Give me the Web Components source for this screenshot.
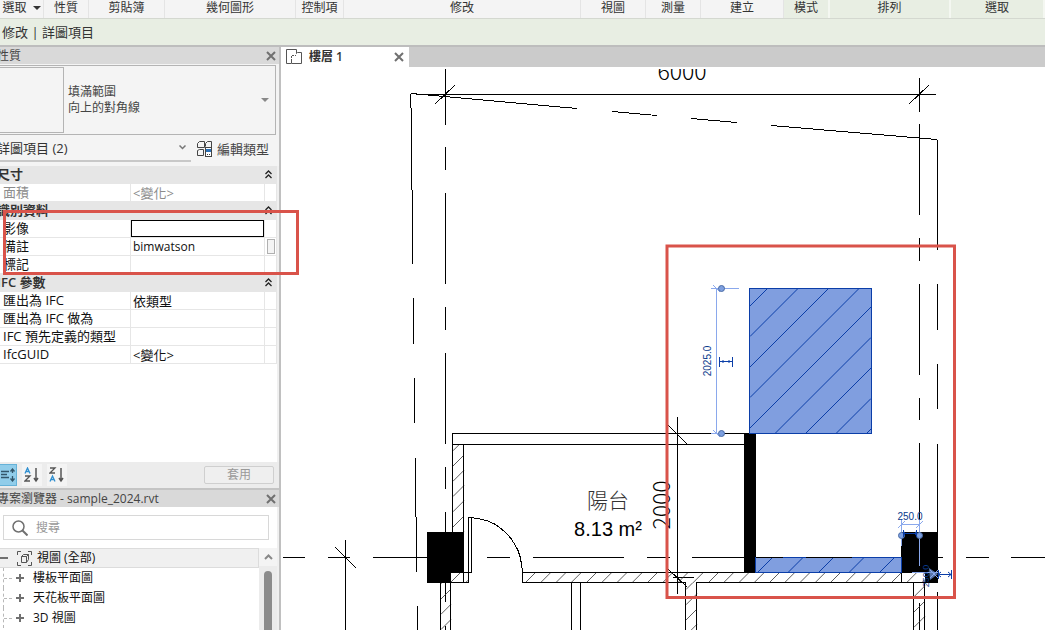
<!DOCTYPE html>
<html lang="zh-Hant">
<head>
<meta charset="utf-8">
<title>樓層 1</title>
<style>
html, body { height: 100%; }
body { margin: 0; overflow: hidden; background: #fff; color: #333;
  font: 12px/16px "Open Sans", "Noto Sans CJK TC", sans-serif; }
</style>
</head>
<body>
<cad-app></cad-app>
<script>
const base = `*{box-sizing:border-box} button,input,select{font:inherit;color:inherit;margin:0;padding:0;border:0;background:none;border-radius:0;outline:0} svg{display:block}`;

function define(name, html) {
  customElements.define(name, class extends HTMLElement {
    connectedCallback() {
      if (this.shadowRoot) return;
      const root = this.attachShadow({ mode: 'open' });
      const t = document.createElement('template');
      t.innerHTML = html;
      root.append(t.content.cloneNode(true));
    }
  });
}

define('ribbon-group', `<style>${base}
:host{display:flex;align-items:center;justify-content:center;height:18px;padding-bottom:2px;border-right:1px solid #e4e4e4;background:#f4f4f4;white-space:nowrap;overflow:hidden}
:host([context]){background:#e8eee3;border-right:2px solid #f4f7f1}
</style><slot></slot>`);

define('ribbon-bar', `<style>${base}
:host{display:block;border-bottom:2px solid #bdbdbd}
.groups{display:grid;grid-template-columns:44fr 45fr 76fr 131fr 48fr 237fr 65fr 55fr 83fr 46fr 121fr 94fr;border-bottom:1px solid #d4d8d0}
button{display:flex;align-items:center;gap:6px}
.options{height:26px;background:#e8eee3;padding:5px 2px;font-size:13px}
</style>
<div class="groups">
<ribbon-group><button>選取<svg width="8" height="4"><path d="M0 0h8L4 4z" fill="#333"/></svg></button></ribbon-group>
<ribbon-group>性質</ribbon-group><ribbon-group>剪貼簿</ribbon-group><ribbon-group>幾何圖形</ribbon-group>
<ribbon-group>控制項</ribbon-group><ribbon-group>修改</ribbon-group><ribbon-group>視圖</ribbon-group>
<ribbon-group>測量</ribbon-group><ribbon-group>建立</ribbon-group>
<ribbon-group context>模式</ribbon-group><ribbon-group context>排列</ribbon-group><ribbon-group context>選取</ribbon-group>
</div>
<div class="options">修改 | 詳圖項目</div>`);

define('close-button', `<style>${base}
:host{display:block} button{display:block}
</style><button aria-label="關閉"><svg width="10" height="10" stroke="#707070" stroke-width="2"><path d="M1 1l8 8M9 1l-8 8"/></svg></button>`);

define('panel-title', `<style>${base}
:host{display:flex;align-items:center;justify-content:space-between;height:17px;padding-right:3px;background:#d9d9d9;color:#444;text-indent:-3px;white-space:nowrap}
</style><span><slot></slot></span><close-button></close-button>`);

define('type-selector', `<style>${base}
:host{display:block;padding:1px 3px 0 0}
button{display:flex;align-items:center;width:100%;height:70px;border:1px solid #b4b4b4;border-left:0;text-align:left;padding-right:6px;color:#444}
.preview{width:64px;height:66px;border:1px solid #b4b4b4;border-left:0;margin-right:4px}
.name{flex:1}
.filter{display:flex;align-items:flex-start;height:31px;font-size:13px}
.filter select{appearance:none;width:191px;height:27px;border-bottom:2px solid #c8c8c8;text-indent:-3px;
 background:url("data:image/svg+xml,%3Csvg xmlns='http://www.w3.org/2000/svg' width='7' height='5'%3E%3Cpath d='M.5 .5l3 3 3-3' fill='none' stroke='%23777' stroke-width='1.500'/%3E%3C/svg%3E") no-repeat right 5px center}
.filter .edit{display:flex;align-items:center;gap:5px;margin-left:5px;border:0;width:auto;height:27px;padding:0;font-size:13px;white-space:nowrap}
</style>
<button aria-label="類型選取器"><span class="preview"></span><span class="name">填滿範圍<br>向上的對角線</span><svg width="8" height="4"><path d="M0 0h8L4 4z" fill="#888"/></svg></button>
<div class="filter"><select aria-label="詳圖項目"><option>詳圖項目 (2)</option></select>
<button class="edit"><svg width="16" height="16" fill="none" stroke="#444"><path d="M1.500 2.500l2-2h5v6h-7zM9.500 2.500l2-2h4v6M1.500 9.500l2-1h4v6h-6zM9.500 2.500v3"/><rect x="9.500" y="6.500" width="6" height="9" fill="#fff"/><path d="M10 8h5v3h-5z" fill="#2a6fb5" stroke="none"/><path d="M11 13.500h1M13 13.500h1"/></svg>編輯類型</button></div>`);

const section = n => `<tr class="head"><th colspan="2" scope="colgroup">${n}</th><th><button aria-label="收合 ${n}"><svg width="7" height="9" fill="none" stroke="#222" stroke-width="1.300"><path d="M.5 4l3-3 3 3M.5 8l3-3 3 3"/></svg></button></th></tr>`;
const row = (n, v, cls = '', extra = '') => `<tr class="${cls}"><td><label for="p-${n}">${n}</label></td><td><input id="p-${n}" value="${v}"></td><td>${extra}</td></tr>`;

define('property-table', `<style>${base}
:host{display:block;position:relative;background:#fff;font-size:13px;color:#111;border-right:2px solid #f0f0f0}
table{width:100%;table-layout:fixed;border-collapse:separate;border-spacing:0}
col.n{width:131px} col.b{width:12px}
tr{height:18px}
th,td{padding:0;line-height:14px;height:18px;white-space:nowrap;vertical-align:top}
td{border-bottom:1px solid #e6e6e6;border-right:1px solid #e6e6e6}
td:first-child{padding-left:3px} label{display:block;height:17px;line-height:16px} input{display:block;width:100%;height:17px;padding-left:2px;line-height:16px}
.head th{background:#e6e6e6;text-align:left;text-indent:-3px;font-weight:600;color:#333;line-height:16px}
.head button{display:block;padding:4px 0;text-indent:0}
.off{color:#8c8c8c} .active input{border:1px solid #000}
.memo input{font-size:12px}
.more{display:block;width:8px;height:15px;margin:1px auto;border:1px solid #b0b0b0;background:#f4f4f4}
.mark{position:absolute;left:3px;top:44px;width:296px;height:65px;border:3px solid #d9534a;z-index:2;pointer-events:none}
</style>
<table><colgroup><col class="n"><col><col class="b"></colgroup>
${section('尺寸')}${row('面積', '&lt;變化&gt;', 'off')}
${section('識別資料')}${row('影像', '', 'active')}${row('備註', 'bimwatson', 'memo', '<button class="more" aria-label="瀏覽"></button>')}${row('標記', '')}
${section('IFC 參數')}${row('匯出為 IFC', '依類型')}${row('匯出為 IFC 做為', '')}${row('IFC 預先定義的類型', '')}${row('IfcGUID', '&lt;變化&gt;')}
</table><div class="mark"></div>`);

const sortIcon = (a, b, ca, cb) => `<svg width="16" height="16" fill="none" stroke-width="1.300"><g stroke="${ca}"><path d="${a}"/></g><g stroke="${cb}" transform="translate(0 8)"><path d="${b}"/></g><path d="M12 1v12M10 11l2 3 2-3" stroke="#555" stroke-width="1.500"/></svg>`;
const A = 'M1 6.500L3.500 1 6 6.500M2 4.500h3', Z = 'M1 1h5L1 6h5';
define('property-actions', `<style>${base}
:host{display:flex;align-items:center;gap:5px;height:28px;background:#ececec;border-bottom:2px solid #c4c4c4;padding:0 5px 1px 0}
button{display:grid;place-items:center;width:20px;height:22px;background:#f4f4f4}
.on{width:17px;background:#91cdea;border:1px solid #66b2d8;border-left:0}
.apply{width:70px;height:18px;margin-left:auto;border:1px solid #cfcfcf;border-radius:2px;color:#999;background:#efefef}
</style>
<button class="on" aria-label="分組"><svg width="15" height="14" fill="none" stroke="#33566a" stroke-width="1.300"><path d="M0 3.500h8M0 6.500h6M0 9.500h8M11.500 1v4M9.500 3.500l2-2.500 2 2.500M11.500 8v5M9.500 10.500l2 2.500 2-2.500"/></svg></button>
<button aria-label="遞增排序">${sortIcon(A, Z, '#2f8fd0', '#555')}</button>
<button aria-label="遞減排序">${sortIcon(Z, A, '#555', '#2f8fd0')}</button>
<button class="apply">套用</button>`);

define('tree-item', `<style>${base}
:host{display:flex;align-items:center;height:20px;margin-left:3px;border-left:1px dashed #b8b8b8;color:#111;white-space:nowrap}
.dash{width:8px;border-top:1px dashed #b8b8b8;margin-right:4px}
button{display:block;margin-right:9px}
</style><span class="dash"></span><button aria-label="展開"><svg width="8" height="8" stroke="#707070" stroke-width="2"><path d="M0 4h8M4 0v8"/></svg></button><slot></slot>`);

define('project-browser', `<style>${base}
:host{display:flex;flex-direction:column;flex:1;min-height:0;background:#fff;border-right:2px solid #f0f0f0}
.search{display:flex;align-items:center;gap:8px;height:25px;margin:8px 8px 8px 3px;padding-left:8px;border:1px solid #d8d8d8}
input{flex:1;min-width:0} input::placeholder{color:#999;opacity:1}
.tree{display:flex;flex:1;min-height:0;overflow:hidden}
.items{flex:1}
.root{display:flex;align-items:center;height:20px;background:#f0f0f0;border:1px solid #dcdcdc;border-left:0;color:#111}
.root button{margin-right:9px}
.root svg + span{margin-left:5px}
.scroll{width:18px;background:#ececec;display:flex;flex-direction:column;align-items:center}
.scroll button{width:18px;height:18px;display:grid;place-items:center;background:#f4f4f4}
.thumb{width:8px;flex:1;margin-top:5px;border-radius:4px 4px 0 0;background:#8c8c8c}
</style>
<div class="search"><svg width="16" height="16" fill="none" stroke="#707070"><circle cx="6.500" cy="6.500" r="5.500" stroke-width="1.500"/><path d="M10.500 10.500l5 5" stroke-width="2"/></svg><input type="text" aria-label="搜尋" placeholder="搜尋"></div>
<div class="tree"><div class="items">
<div class="root"><button aria-label="收合"><svg width="8" height="2"><path d="M0 0h8v2H0z" fill="#707070"/></svg></button><svg width="15" height="15" fill="none" stroke="#555"><path d="M.5 4V.5H4M11 .5h3.500V4M14.500 11v3.500H11M4 14.500H.5V11M4.500 5.500l2-2h5v5l-2 3h-5zM4.500 5.500h5v6M9.500 5.500l2-2"/></svg><span>視圖 (全部)</span></div>
<tree-item>樓板平面圖</tree-item><tree-item>天花板平面圖</tree-item><tree-item>3D 視圖</tree-item>
</div><div class="scroll"><button aria-label="向上捲動"><svg width="9" height="6" fill="none" stroke="#888" stroke-width="2"><path d="M1 5l3.500-3.500L8 5"/></svg></button><div class="thumb"></div></div></div>`);

/* 45-degree hatch lines x + y = c, cut to a rectangle */
function hatch(x, y, w, h, c, step) {
  let d = '';
  const lo = x + y, hi = x + y + w + h;
  for (let k = c - Math.ceil((c - lo) / step) * step; k < hi; k += step) {
    const x1 = Math.max(x, k - y - h), x2 = Math.min(x + w, k - y);
    if (x2 > x1) d += `M${x1} ${k - x1}L${x2} ${k - x2}`;
  }
  return d;
}
const vert = (x, ...p) => p.map(([a, b]) => `M${x} ${a}V${b}`).join('');
const horz = (y, ...p) => p.map(([a, b]) => `M${a} ${y}H${b}`).join('');

define('plan-view', `<style>${base}
:host{display:block;min-height:0;background:#fff;overflow:hidden}
svg{width:100%;height:100%}
text{font-family:"Liberation Sans","Noto Sans CJK TC",sans-serif;fill:#000;text-anchor:middle}
.big{font:300 23px "Noto Sans CJK TC",sans-serif}
.ln{fill:none;stroke:#000;shape-rendering:crispEdges}
.h{fill:none;stroke:#333;stroke-width:.8}
.sel{fill:#809edf;stroke:#0b3ea8;shape-rendering:crispEdges}
.sh{fill:none;stroke:#0b3ea8}
.dim{fill:none;stroke:#8aa8ec}
.grip{fill:#7d9fdf;stroke:#4a6ba5}
.dk{fill:none;stroke:#0b3ea8}
.bt{fill:#0a3a8c;font-size:10px}
</style>
<svg role="img" aria-label="樓層平面圖"><g transform="translate(-281 -67)">
<text class="big" x="682" y="80">6000</text><rect x="640" y="60" width="90" height="9" fill="#fff"/>
<path class="ln" d="${vert(445.5, [69,125],[147,170],[193,284],[307,330],[353,444],[467,489],[512,533],[583,602],[626,900])}
${vert(919.5, [78,112],[124,215],[238,261],[284,375],[398,420],[443,532],[603,900])}
${vert(937.5, [140,250],[284,330],[364,409],[444,532],[592,900])}
M410.500 94V108M411.500 108V190M412.500 190V264M413.500 298V344M414.500 378V423M415.500 458V517M416.500 517V572M417.500 606V900
${horz(94.5, [416,936])}${horz(557.5, [283,305],[328,350],[373,427],[487,510],[533,624],[647,670],[692,745],[938,943],[966,989],[1011,1900])}
M345.500 540V900M677.500 417V594M673 577.500H694
M411 93.500L577 108.500M612 111.500L657 115.500M691 118.500L737 122.500M771 125.500L937 139.500"/>
<path class="ln" d="M435 104L455 85M909 104L929 85M335 547L356 568M668 425L687 444M668 569L687 587"/>
<path class="h" d="${hatch(453,445,11,88,919,15.25)}${hatch(451,573,17,10,1033,15.25)}${hatch(523,573,402,10,1108,15.25)}${hatch(441,583,10,317,1040,15.25)}${hatch(686,583,11,317,1306,15.25)}${hatch(914,583,11,317,1526,15.25)}"/>
<path class="ln" d="M745 433.500H453M452.500 433V533M453 444.500H745M463.500 444V533M463.500 573V582M451 582.500H468.500V572M464 572.500H471.500V517.500H468.500V573M522.500 572V582.500H685.500V900M522 572.500H902M696.500 900V582.500H913.500V900M901.500 573V582M924.500 583V900M571.500 583V900M580.500 583V900M440.500 583V900M450.500 583V900M913 582.500H925"/>
<path class="ln" d="M471 517.500C484 519 493 522 499 527C506 532 512 539 515 545C520 552 521 560 522.500 572"/>
<path d="M427 532H464V573H451V583H427zM744 433H756V573H744zM901 532H938V583H925V573H901z"/>
<rect class="sel" x="749.500" y="288.500" width="122" height="145"/><path class="sh" d="${hatch(750,289,121,144,1056,30.5)}"/>
<rect class="sel" x="755.500" y="557.500" width="146" height="15"/><path class="sh" d="${hatch(756,558,145,14,1330,30.5)}"/>
<path class="ln" d="M756 557.500H783M806 557.500H852"/>
<text x="608" y="508" font-size="21" font-weight="300" style="fill:#333">陽台</text>
<text x="608" y="536" font-size="20">8.13 m²</text>
<text class="big" transform="translate(670 505) rotate(-90)">2000</text>
<path class="dim" d="M716.500 288V434M711 288.500H739M711 433.500H721M713 285L720 292M713 430L720 437M901.500 519V546M919.500 519V566M901 524.500H920M898 528L905 521M916 528L923 521M912 572.500H938"/>
<circle class="grip" cx="721.500" cy="288.500" r="3"/><circle class="grip" cx="721.500" cy="433.500" r="3"/>
<circle class="grip" cx="901.500" cy="535.500" r="3"/><circle class="grip" cx="919.500" cy="535.500" r="3"/>
<path class="dk" d="M719.500 357V367M732.500 357V367M720 361.500H732M723 360V363M729 360V363M903.500 530V537M916.500 530V537M904 533.500H916M905 535l-2-1.500 2-1.500M915 535l2-1.500-2-1.500M938.500 570V579M951.500 570V579M938 574.500H951M941 572l-3 2.500 3 2.500M948 572l3 2.500-3 2.500"/>
<text class="bt" transform="translate(711 361) rotate(-90)">2025.0</text>
<text class="bt" x="910" y="520">250.0</text>
<text class="bt" transform="translate(929 576) rotate(-90)" style="font-size:9px">250.0</text>
<path d="M929 568l9 6-8 6z" fill="#6f92d6" fill-opacity=".8"/><path class="dim" d="M930 570l8 8M930 578l8-8"/>
<rect x="667" y="246" width="287.500" height="351.500" fill="none" stroke="#d9534a" stroke-width="3"/>
</g></svg>`);

define('view-tabs', `<style>${base}
:host{display:flex;height:20px;background:#cbcbcb}
.tab{display:flex;align-items:center;width:128px;padding:0 5px;background:#fff;font-weight:600;color:#333}
.tab span{flex:1;margin-left:7px}
</style>
<div class="tab"><svg width="16" height="16" fill="none" stroke="#555"><path d="M5 14.500H.5V.5h10v4M10.500 4.500l1-1h4v11h-10V12"/><path d="M5.500 12V6.500M6 6.500h4" stroke-dasharray="2 1"/></svg><span>樓層 1</span><close-button></close-button></div>`);

define('cad-app', `<style>${base}
:host{display:flex;flex-direction:column;height:100vh}
main{display:flex;flex:1;min-height:0}
aside{display:flex;flex-direction:column;width:281px;border-right:2px solid #c0c0c0;background:#f4f4f4;position:relative;z-index:1}
.props{display:flex;flex-direction:column;height:443px}
property-table{flex:1;min-height:0}
.view{display:flex;flex-direction:column;flex:1;min-width:0}
plan-view{flex:1}
</style>
<ribbon-bar></ribbon-bar>
<main><aside>
<section class="props"><panel-title>性質</panel-title><type-selector></type-selector><property-table></property-table><property-actions></property-actions></section>
<panel-title>專案瀏覽器 - sample_2024.rvt</panel-title><project-browser></project-browser>
</aside><section class="view"><view-tabs></view-tabs><plan-view></plan-view></section></main>`);
</script>
</body>
</html>
